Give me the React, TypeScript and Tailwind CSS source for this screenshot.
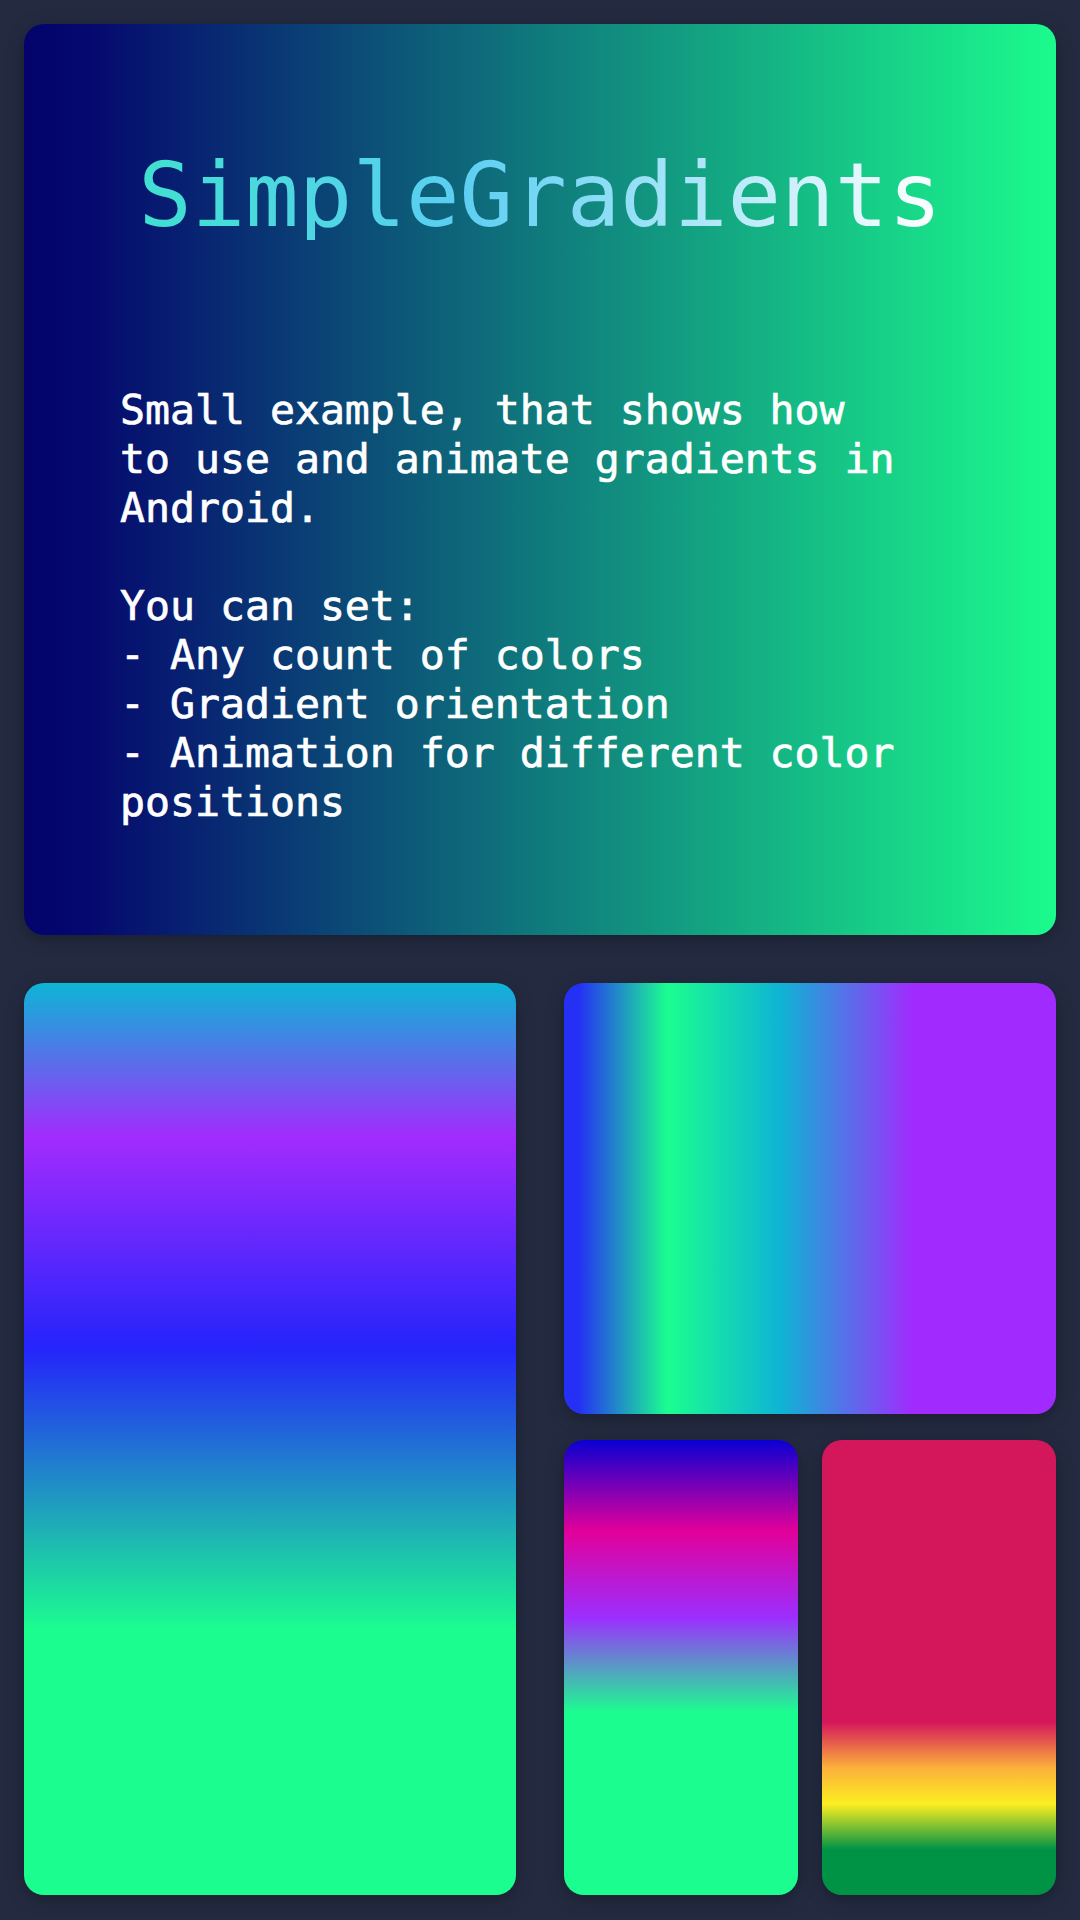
import React from 'react';

const mono = "font-['DejaVu_Sans_Mono','Liberation_Mono',monospace]";

const lines = [
  'Small example, that shows how',
  'to use and animate gradients in',
  'Android.',
  '',
  'You can set:',
  '- Any count of colors',
  '- Gradient orientation',
  '- Animation for different color',
  'positions',
];

export default function App() {
  return (
    <div className="min-h-[1920px] w-[1080px] bg-[#242b41] p-6 flex flex-col gap-12">
      {/* header card */}
      <div className="h-[911px] rounded-[20px] shadow-[0_4px_18px_rgba(0,0,0,0.3)] bg-[linear-gradient(to_right,#03036b_0%,#05086e_6%,#1bfb8d_100%)] pt-[127px]">
        <div className="flex justify-center">
          <h1
            className={`${mono} text-[89px] leading-[89px] w-fit bg-[linear-gradient(to_right,#3fe0d0,#5ccef2_40%,#ffffff)] bg-clip-text text-transparent`}
          >
            SimpleGradients
          </h1>
        </div>
        <p
          className={`${mono} mt-[145px] pl-[96px] text-[41.5px] leading-[49px] text-white whitespace-pre [-webkit-text-stroke:0.7px_white]`}
        >
          {lines.map((l, i) => (
            <span key={i} className="block h-[49px]">
              {l}
            </span>
          ))}
        </p>
      </div>

      {/* gradient samples */}
      <div className="h-[912px] grid grid-cols-2 gap-12">
        <div className="rounded-[20px] shadow-[0_4px_18px_rgba(0,0,0,0.3)] bg-[linear-gradient(to_bottom,#0db5d6_0%,#a22bfe_17%,#2424fb_40%,#1bfe8f_71%,#1bfe8f_100%)]" />
        <div className="flex flex-col gap-[26px]">
          <div className="h-[431px] rounded-[20px] shadow-[0_4px_18px_rgba(0,0,0,0.3)] bg-[linear-gradient(to_right,#2530f5_0%,#2530f5_3%,#1bfe8f_21%,#0eb4d4_44%,#a12bfe_71%,#a12bfe_100%)]" />
          <div className="flex-1 grid grid-cols-2 gap-6">
            <div className="rounded-[20px] shadow-[0_4px_18px_rgba(0,0,0,0.3)] bg-[linear-gradient(to_bottom,#0a00d2_0%,#e2009a_20%,#9c2efe_39%,#1bfe8f_60%,#1bfe8f_100%)]" />
            <div className="rounded-[20px] shadow-[0_4px_18px_rgba(0,0,0,0.3)] bg-[linear-gradient(to_bottom,#d4175b_0%,#d4175b_62%,#fbb03b_72%,#fcee21_80%,#009245_90%,#009245_100%)]" />
          </div>
        </div>
      </div>
    </div>
  );
}
